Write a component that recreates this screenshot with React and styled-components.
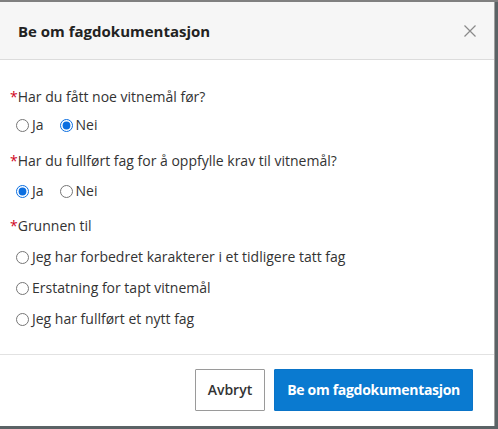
import React, { useState } from "react";
import styled, { createGlobalStyle } from "styled-components";

const Global = createGlobalStyle`
  html, body { margin: 0; padding: 0; }
  body {
    width: 498px; height: 429px; overflow: hidden;
    background: #5b6366;
    font-family: "Open Sans", "Noto Sans", sans-serif;
    color: #333;
  }
`;

const Overlay = styled.div`
  width: 498px;
  height: 429px;
  background: linear-gradient(#808080 0 2px, #5b6366 2px);
  padding-top: 2px;
  box-sizing: border-box;
  overflow: hidden;
`;

const Modal = styled.div`
  width: 495px;
  height: 424px;
  background: #fff;
  border-right: 1px solid #a0a0a0;
  box-sizing: border-box;
  display: flex;
  flex-direction: column;
`;

const Header = styled.div`
  height: 58px;
  flex: none;
  background: #f6f6f6;
  border-bottom: 1px solid #dcdcdc;
  display: flex;
  align-items: center;
  justify-content: space-between;
  padding: 0 17px 0 18px;
  box-sizing: border-box;
`;

const Title = styled.h2`
  margin: 0;
  font-size: 15px;
  font-weight: 700;
  color: #222;
`;

const Close = styled.button`
  border: 0;
  background: transparent;
  padding: 0;
  width: 14px;
  height: 14px;
  display: flex;
  cursor: pointer;
`;

const Body = styled.div`
  flex: 1;
  padding: 27px 10px 7px 10px;
  display: flex;
  flex-direction: column;
`;

const Question = styled.div`
  font-size: 14px;
  color: #333;
  line-height: 20px;
  margin-bottom: ${(p) => p.$gap}px;
`;

const Star = styled.span`
  color: #d0021b;
`;

const Options = styled.div`
  display: flex;
  flex-direction: ${(p) => (p.$column ? "column" : "row")};
  gap: ${(p) => (p.$column ? "11px" : "16px")};
  padding-left: 6px;
  margin-bottom: ${(p) => p.$after}px;
`;

const Option = styled.label`
  display: flex;
  align-items: center;
  font-size: 14px;
  line-height: 20px;
  color: #333;
  gap: 3px;
  cursor: pointer;
`;

const Radio = styled.input.attrs({ type: "radio" })`
  margin: 0;
  width: 13px;
  height: 13px;
  accent-color: #0b6ee0;
`;

const Footer = styled.div`
  flex: none;
  border-top: 1px solid #e2e2e2;
  height: 72px;
  box-sizing: border-box;
  display: flex;
  align-items: center;
  justify-content: flex-end;
  gap: 9px;
  padding: 0 21px 2px 0;
`;

const Button = styled.button`
  height: 42px;
  padding: 0 ${(p) => (p.$primary ? "12px" : "12px")};
  font-family: "Open Sans", sans-serif;
  font-size: 14px;
  font-weight: ${(p) => (p.$primary ? 700 : 600)};
  letter-spacing: ${(p) => (p.$primary ? "-0.3px" : "0")};
  border: 1px solid ${(p) => (p.$primary ? "#0a74c8" : "#9a9a9a")};
  background: ${(p) => (p.$primary ? "#0a7ad0" : "#fff")};
  color: ${(p) => (p.$primary ? "#fff" : "#333")};
  border-radius: 1px;
  cursor: pointer;
`;

function RadioGroup({ name, options, value, onChange, column, after }) {
  return (
    <Options $column={column} $after={after}>
      {options.map((o) => (
        <Option key={o}>
          <Radio name={name} checked={value === o} onChange={() => onChange(o)} />
          {o}
        </Option>
      ))}
    </Options>
  );
}

export default function App() {
  const [a, setA] = useState("Nei");
  const [b, setB] = useState("Ja");
  const [c, setC] = useState(null);
  return (
    <>
      <Global />
      <Overlay>
        <Modal>
          <Header>
            <Title>Be om fagdokumentasjon</Title>
            <Close aria-label="Lukk">
              <svg width="14" height="14" viewBox="0 0 14 14">
                <path d="M1.5 1.5 L12.5 12.5 M12.5 1.5 L1.5 12.5" stroke="#8a8a8a" strokeWidth="1.2" />
              </svg>
            </Close>
          </Header>
          <Body>
            <Question $gap={8}><Star>*</Star>Har du fått noe vitnemål før?</Question>
            <RadioGroup name="a" options={["Ja", "Nei"]} value={a} onChange={setA} after={16} />
            <Question $gap={10}><Star>*</Star>Har du fullført fag for å oppfylle krav til vitnemål?</Question>
            <RadioGroup name="b" options={["Ja", "Nei"]} value={b} onChange={setB} after={15} />
            <Question $gap={11}><Star>*</Star>Grunnen til</Question>
            <RadioGroup
              name="c"
              column
              after={16}
              options={[
                "Jeg har forbedret karakterer i et tidligere tatt fag",
                "Erstatning for tapt vitnemål",
                "Jeg har fullført et nytt fag",
              ]}
              value={c}
              onChange={setC}
            />
          </Body>
          <Footer>
            <Button>Avbryt</Button>
            <Button $primary>Be om fagdokumentasjon</Button>
          </Footer>
        </Modal>
      </Overlay>
    </>
  );
}
